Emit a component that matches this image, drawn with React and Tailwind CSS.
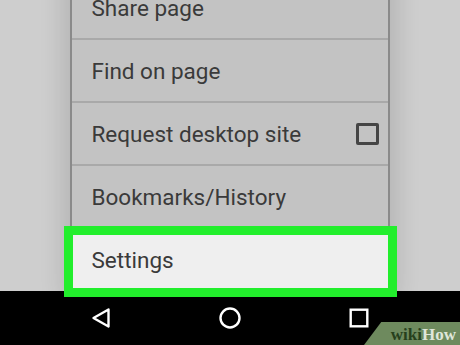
export default function App() {
  const rows = ['Share page', 'Find on page', 'Request desktop site', 'Bookmarks/History']

  return (
    <div className="w-[460px] h-[345px] overflow-hidden bg-[#cecece] flex flex-col relative" style={{ fontFamily: 'Roboto, "Liberation Sans", sans-serif' }}>
      {/* page + menu */}
      <div className="flex-1 flex justify-center">
        <div className="w-[320px] mt-[-23px] ml-[-1px] bg-[#c3c3c3] border-l-2 border-r-2 border-[#8a8a8a] shadow-[0_0_22px_8px_rgba(0,0,0,0.12)] flex flex-col">
          {rows.map((label, i) => (
            <div key={label} className="h-[63px] flex items-center justify-between pl-[20px] pr-[8px] pt-[3px] border-b-2 border-[#a9a9a9] text-[22.5px] text-[#3a3a3a]">
              <span>{label}</span>
              {i === 2 && <span className="w-[23px] h-[22px] mt-[-3px] border-[3px] border-[#454545] rounded-[2px] mr-[1px]" />}
            </div>
          ))}
          <div className="h-[61px] flex items-center pl-[20px] pt-[3px] text-[22.5px] text-[#3a3a3a] bg-[#efefef] relative">
            <span>Settings</span>
            {/* highlight */}
            <div className="absolute left-[-8px] right-[-9px] top-[-3px] bottom-[-7px] border-[9px] border-[#22ee2c]" />
          </div>
        </div>
      </div>

      {/* nav bar */}
      <div className="h-[54px] bg-black flex items-center justify-between pl-[91px] pr-[91px] pb-[1px]">
        <svg width="20" height="22" viewBox="0 0 20 22">
          <path d="M17.5 2.5 L2.5 11 L17.5 19.5 Z" fill="none" stroke="#fff" strokeWidth="2.4" strokeLinejoin="round" />
        </svg>
        <svg width="24" height="24" viewBox="0 0 24 24">
          <circle cx="12" cy="12" r="9.5" fill="none" stroke="#fff" strokeWidth="2.4" />
        </svg>
        <svg width="20" height="20" viewBox="0 0 20 20">
          <rect x="1.7" y="1.7" width="16.6" height="16.6" fill="none" stroke="#fff" strokeWidth="2.4" />
        </svg>
      </div>

      {/* wikiHow badge */}
      <div className="absolute right-0 bottom-0 w-[96px] h-[23px] bg-[#6e8a5e] [clip-path:polygon(18%_0,100%_0,100%_100%,0_100%)] flex items-center justify-end pr-[4px] pt-[2px]">
        <span className="text-[17px] font-bold leading-none" style={{ fontFamily: '"Liberation Serif", serif' }}>
          <span className="text-[#26401c]">wiki</span><span className="text-[#dfe6da]">How</span>
        </span>
      </div>
    </div>
  )
}
